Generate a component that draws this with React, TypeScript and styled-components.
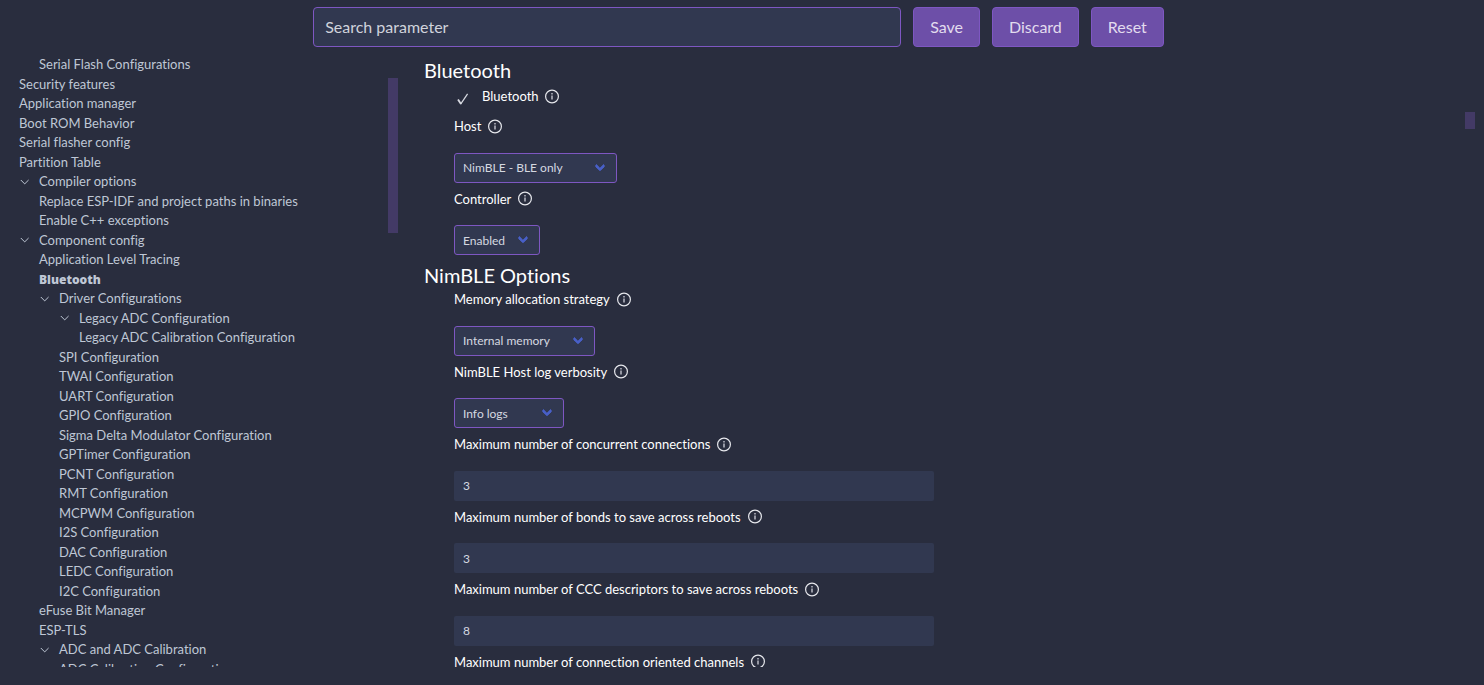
import React from 'react';
import styled, { createGlobalStyle } from 'styled-components';

const GlobalStyle = createGlobalStyle`
  *, *::before, *::after { box-sizing: border-box; }
  body {
    margin: 0;
    background: #292d3e;
    color: #ffffff;
    font-family: Lato, "Noto Sans", sans-serif;
    font-size: 13px;
    font-variant-ligatures: none;
    line-height: 150%;
  }
  button, input, select { font-family: inherit; }
`;

const Page = styled.div`
  display: flex;
  flex-direction: column;
  height: 100vh;
  padding: 7px 9px 18px 0;
`;

const Toolbar = styled.header`
  display: flex;
  justify-content: center;
  flex: none;
  gap: 12px;
  padding-left: 2px;
`;

const SearchInput = styled.input`
  flex: 1;
  min-width: 0;
  max-width: 588px;
  height: 40px;
  padding: 0 11px 2px;
  border: 1px solid #7e57c2;
  border-radius: 4px;
  background: #313850;
  color: #ffffff;
  font-size: 16px;
  &::placeholder { color: #d0d3dc; opacity: 1; }
`;

const ActionButton = styled.button`
  height: 40px;
  padding: 0 16px 2px;
  border: 1px solid #7e57c2;
  border-radius: 4px;
  background: #6d4fa8;
  color: #e2dcee;
  font-size: 16px;
`;

const Body = styled.div`
  display: flex;
  flex: 1;
  min-height: 0;
  padding-top: 7px;
`;

const Sidebar = styled.nav`
  display: flex;
  flex: 0 0 398px;
  min-height: 0;
`;

const Main = styled.main`
  display: flex;
  flex: 1;
  min-width: 0;
  min-height: 0;
`;

const ScrollArea = styled.div`
  flex: 1;
  min-width: 0;
  overflow-y: auto;
  scrollbar-width: none;
`;

const Track = styled.div<{ $start: number }>`
  flex: 0 0 10px;
  padding-top: ${p => p.$start}px;
`;

const Thumb = styled.div<{ $size: number }>`
  height: ${p => p.$size}px;
  background: #433a66;
`;

const Tree = styled.ul`
  margin: 0;
  padding: 1px 0 0 19px;
  list-style: none;
`;

const TreeItem = styled.li<{ $level: number }>`
  display: flex;
  align-items: center;
  padding-left: ${p => p.$level * 20}px;
`;

const TreeLink = styled.a<{ $selected?: boolean }>`
  color: #bfc7d5;
  font-family: ${p => (p.$selected ? '"Open Sans", sans-serif' : 'inherit')};
  font-size: ${p => (p.$selected ? 12 : 13)}px;
  font-weight: ${p => (p.$selected ? 800 : 400)};
  text-decoration: none;
  white-space: nowrap;
`;

const Expander = styled.span`
  display: flex;
  flex: 0 0 20px;
  padding-left: 1px;
  color: #bfc7d5;
`;

const Settings = styled(ScrollArea)`
  padding: 3px 0 0 26px;
`;

const GroupTitle = styled.h2`
  margin: 0 0 2px;
  font-size: 20px;
  font-weight: 400;
  line-height: 26px;
`;

const Field = styled.div`
  padding: 0 0 7px 30px;
`;

const FieldHead = styled.div`
  display: flex;
  align-items: center;
  gap: 6px;
  margin-bottom: 16px;
`;

const CheckRow = styled.div`
  display: flex;
  align-items: center;
  gap: 5px;
  height: 24px;
  margin: 0 0 8px 30px;
`;

const CheckBox = styled.span`
  display: grid;
  width: 23px;
  & > * { grid-area: 1 / 1; }
`;

const CheckInput = styled.input`
  appearance: none;
  width: 18px;
  height: 18px;
  margin: 0;
`;

const FieldLabel = styled.label`
  color: #ffffff;
`;

const SelectBox = styled.div<{ $width: number }>`
  position: relative;
  width: ${p => p.$width}px;
  height: 30px;
  &::after {
    content: "";
    position: absolute;
    top: 9px;
    right: 13px;
    width: 8px;
    height: 8px;
    border: solid #485fc7;
    border-width: 0 0 3px 3px;
    border-radius: 2px;
    transform: rotate(-45deg);
    pointer-events: none;
  }
`;

const SelectInput = styled.select`
  appearance: none;
  display: block;
  width: 100%;
  height: 100%;
  padding: 0 8px;
  border: 1px solid #7e57c2;
  border-radius: 3px;
  background: #313850;
  color: #d5d8e0;
  font-size: 12px;
`;

const NumberInput = styled.input`
  display: block;
  width: 480px;
  max-width: 100%;
  height: 30px;
  padding: 0 9px;
  border: 0;
  border-radius: 2px;
  background: #313850;
  color: #d5d8e0;
  font-size: 12px;
`;

const Chevron = () => (
  <svg width="10" height="10" viewBox="0 0 10 10" fill="none" stroke="currentColor" aria-hidden="true">
    <path d="M0.8 3L4.7 6.9L8.6 3" />
  </svg>
);

const CheckMark = () => (
  <svg width="18" height="18" viewBox="0 0 18 18" fill="none" stroke="#d8dae2" aria-hidden="true">
    <path d="M4 11.6L7 16" strokeWidth="1.8" />
    <path d="M6.6 16.2L13.6 5.8" strokeWidth="1.2" />
  </svg>
);

const InfoIcon = () => (
  <svg width="16" height="16" viewBox="0 0 16 16" fill="none" aria-hidden="true">
    <circle cx="8" cy="7.5" r="6.4" stroke="#e6e7ec" strokeWidth="1.2" />
    <path d="M8 4V5.5M8 6.5V10.5" stroke="#d0d2da" strokeWidth="1.3" />
  </svg>
);

type Node = { text: string; level: number; open?: boolean; selected?: boolean };

const nodes: Node[] = [
  { text: 'Serial Flash Configurations', level: 1 },
  { text: 'Security features', level: 0 },
  { text: 'Application manager', level: 0 },
  { text: 'Boot ROM Behavior', level: 0 },
  { text: 'Serial flasher config', level: 0 },
  { text: 'Partition Table', level: 0 },
  { text: 'Compiler options', level: 0, open: true },
  { text: 'Replace ESP-IDF and project paths in binaries', level: 1 },
  { text: 'Enable C++ exceptions', level: 1 },
  { text: 'Component config', level: 0, open: true },
  { text: 'Application Level Tracing', level: 1 },
  { text: 'Bluetooth', level: 1, selected: true },
  { text: 'Driver Configurations', level: 1, open: true },
  { text: 'Legacy ADC Configuration', level: 2, open: true },
  { text: 'Legacy ADC Calibration Configuration', level: 3 },
  { text: 'SPI Configuration', level: 2 },
  { text: 'TWAI Configuration', level: 2 },
  { text: 'UART Configuration', level: 2 },
  { text: 'GPIO Configuration', level: 2 },
  { text: 'Sigma Delta Modulator Configuration', level: 2 },
  { text: 'GPTimer Configuration', level: 2 },
  { text: 'PCNT Configuration', level: 2 },
  { text: 'RMT Configuration', level: 2 },
  { text: 'MCPWM Configuration', level: 2 },
  { text: 'I2S Configuration', level: 2 },
  { text: 'DAC Configuration', level: 2 },
  { text: 'LEDC Configuration', level: 2 },
  { text: 'I2C Configuration', level: 2 },
  { text: 'eFuse Bit Manager', level: 1 },
  { text: 'ESP-TLS', level: 1 },
  { text: 'ADC and ADC Calibration', level: 1, open: true },
  { text: 'ADC Calibration Configuration', level: 2 },
];

type FieldProps = { id: string; label: string; value: string; width?: number };

const SelectField = ({ id, label, value, width = 160 }: FieldProps) => (
  <Field>
    <FieldHead>
      <FieldLabel htmlFor={id}>{label}</FieldLabel>
      <InfoIcon />
    </FieldHead>
    <SelectBox $width={width}>
      <SelectInput id={id} defaultValue={value}>
        <option>{value}</option>
      </SelectInput>
    </SelectBox>
  </Field>
);

const NumberField = ({ id, label, value }: FieldProps) => (
  <Field>
    <FieldHead>
      <FieldLabel htmlFor={id}>{label}</FieldLabel>
      <InfoIcon />
    </FieldHead>
    <NumberInput id={id} inputMode="numeric" defaultValue={value} />
  </Field>
);

export default function App() {
  return (
    <>
      <GlobalStyle />
      <Page>
        <Toolbar>
          <SearchInput type="text" placeholder="Search parameter" aria-label="Search parameter" />
          <ActionButton type="button">Save</ActionButton>
          <ActionButton type="button">Discard</ActionButton>
          <ActionButton type="button">Reset</ActionButton>
        </Toolbar>
        <Body>
          <Sidebar aria-label="Configuration sections">
            <ScrollArea>
              <Tree>
                {nodes.map(node => (
                  <TreeItem key={node.text} $level={node.level}>
                    {node.open && (
                      <Expander>
                        <Chevron />
                      </Expander>
                    )}
                    <TreeLink href="#" $selected={node.selected}>{node.text}</TreeLink>
                  </TreeItem>
                ))}
              </Tree>
            </ScrollArea>
            <Track $start={24}>
              <Thumb $size={155} />
            </Track>
          </Sidebar>
          <Main>
            <Settings>
              <GroupTitle>Bluetooth</GroupTitle>
              <CheckRow>
                <CheckBox>
                  <CheckInput id="bt-enabled" type="checkbox" defaultChecked />
                  <CheckMark />
                </CheckBox>
                <FieldLabel htmlFor="bt-enabled">Bluetooth</FieldLabel>
                <InfoIcon />
              </CheckRow>
              <SelectField id="bt-host" label="Host" value="NimBLE - BLE only" width={163} />
              <SelectField id="bt-controller" label="Controller" value="Enabled" width={86} />
              <GroupTitle>NimBLE Options</GroupTitle>
              <SelectField id="mem-strategy" label="Memory allocation strategy" value="Internal memory" width={141} />
              <SelectField id="log-verbosity" label="NimBLE Host log verbosity" value="Info logs" width={110} />
              <NumberField id="max-connections" label="Maximum number of concurrent connections" value="3" />
              <NumberField id="max-bonds" label="Maximum number of bonds to save across reboots" value="3" />
              <NumberField id="max-cccds" label="Maximum number of CCC descriptors to save across reboots" value="8" />
              <NumberField id="max-channels" label="Maximum number of connection oriented channels" value="0" />
            </Settings>
            <Track $start={58}>
              <Thumb $size={17} />
            </Track>
          </Main>
        </Body>
      </Page>
    </>
  );
}
